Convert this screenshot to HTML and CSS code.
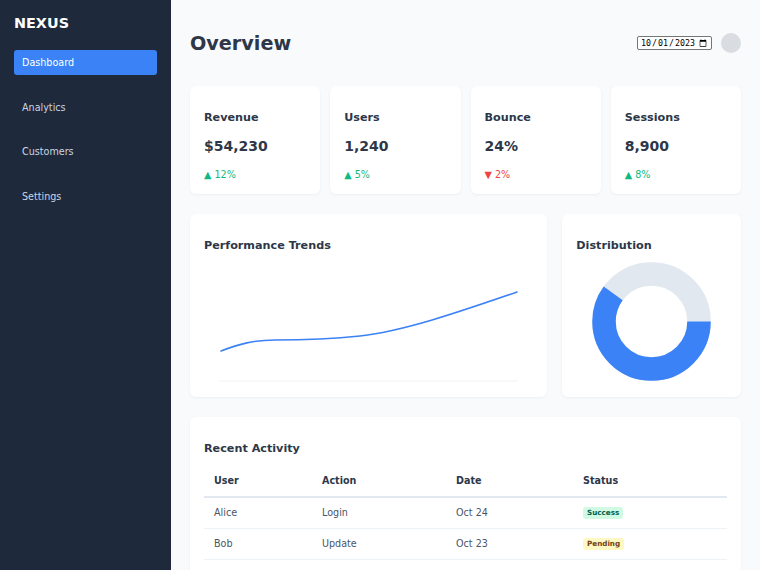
FILE: index.html
```html
<!DOCTYPE html>
<html lang="en">
<head>
<meta charset="UTF-8">
<meta name="viewport" content="width=device-width, initial-scale=1.0">
<title>Nexus Dashboard</title>
<link rel="stylesheet" href="styles.css">
</head>
<body>
<div class="app">
    <aside class="sidebar">
        <div class="logo">NEXUS</div>
        <nav class="nav">
            <a class="nav-item active" href="#">Dashboard</a>
            <a class="nav-item" href="#">Analytics</a>
            <a class="nav-item" href="#">Customers</a>
            <a class="nav-item" href="#">Settings</a>
        </nav>
    </aside>

    <main class="main">
        <header class="header">
            <h1>Overview</h1>
            <div class="header-right">
                <input class="date-input" type="date" value="2023-10-01">
                <div class="avatar"></div>
            </div>
        </header>

        <!-- stat cards -->
        <section class="stats">
            <div class="card stat">
                <h3>Revenue</h3>
                <div class="stat-value">$54,230</div>
                <div class="stat-change up">▲ 12%</div>
            </div>
            <div class="card stat">
                <h3>Users</h3>
                <div class="stat-value">1,240</div>
                <div class="stat-change up">▲ 5%</div>
            </div>
            <div class="card stat">
                <h3>Bounce</h3>
                <div class="stat-value">24%</div>
                <div class="stat-change down">▼ 2%</div>
            </div>
            <div class="card stat">
                <h3>Sessions</h3>
                <div class="stat-value">8,900</div>
                <div class="stat-change up">▲ 8%</div>
            </div>
        </section>

        <!-- charts -->
        <section class="charts">
            <div class="card">
                <h3>Performance Trends</h3>
                <svg class="chart" width="329" height="123" viewBox="0 0 329 123">
                    <line x1="15" y1="121" x2="314" y2="121" stroke="#eef2f6" stroke-width="1"/>
                    <path d="M17 91 C 35 84, 50 80, 71 80 S 128 79, 156 76 C 200 71, 255 52, 313 32"
                          fill="none" stroke="#3b82f6" stroke-width="1.6" stroke-linecap="round"/>
                </svg>
            </div>
            <div class="card">
                <h3>Distribution</h3>
                <svg class="donut" width="123" height="123" viewBox="0 0 123 123">
                    <circle cx="61.5" cy="61.5" r="47.5" fill="none" stroke="#e2e8f0" stroke-width="23.5"/>
                    <circle cx="61.5" cy="61.5" r="47.5" fill="none" stroke="#3b82f6" stroke-width="23.5"
                            stroke-dasharray="179 300"/>
                </svg>
            </div>
        </section>

        <!-- activity table -->
        <section class="card">
            <h3>Recent Activity</h3>
            <table class="table">
                <thead>
                    <tr>
                        <th class="col-user">User</th>
                        <th class="col-action">Action</th>
                        <th class="col-date">Date</th>
                        <th>Status</th>
                    </tr>
                </thead>
                <tbody>
                    <tr>
                        <td>Alice</td>
                        <td>Login</td>
                        <td>Oct 24</td>
                        <td><span class="badge success">Success</span></td>
                    </tr>
                    <tr>
                        <td>Bob</td>
                        <td>Update</td>
                        <td>Oct 23</td>
                        <td><span class="badge pending">Pending</span></td>
                    </tr>
                </tbody>
            </table>
        </section>
    </main>
</div>
</body>
</html>
```

FILE: styles.css
```css
body {
    margin: 0;
    font-family: 'DejaVu Sans', sans-serif;
    color: #2d3748;
    background: #f8fafc;
}

.app {
    display: flex;
    height: 100vh;
}

/* sidebar */
.sidebar {
    width: 171px;
    flex-shrink: 0;
    box-sizing: border-box;
    padding: 15px 14px 14px;
    background: #1e293b;
}

.logo {
    color: white;
    font-size: 14.4px;
    font-weight: bold;
    line-height: 16px;
    margin-bottom: 19px;
}

.nav {
    display: flex;
    flex-direction: column;
    gap: 19.5px;
}

.nav-item {
    display: block;
    padding: 6px 8px;
    line-height: 13px;
    font-size: 9.6px;
    color: #cbd5e1;
    text-decoration: none;
    border-radius: 3px;
}

.nav-item.active {
    background: #3b82f6;
    color: white;
}

/* main area */
.main {
    flex: 1;
    padding: 20px 19px;
    overflow-y: auto;
    scrollbar-width: none;
}

.header {
    display: flex;
    justify-content: space-between;
    align-items: center;
    height: 46px;
    margin-bottom: 20px;
}

.header h1 {
    margin: 0;
    padding-top: 1px;
    font-size: 19.2px;
    line-height: 22px;
    color: #2d3748;
}

.header-right {
    display: flex;
    align-items: center;
    gap: 9px;
}

.date-input {
    width: 75px;
    height: 14px;
    box-sizing: border-box;
    padding: 0 2px;
    font-family: 'DejaVu Sans Mono', monospace;
    font-size: 8.3px;
    border: 1px solid #767676;
    border-radius: 2px;
    background: white;
}

.avatar {
    width: 20px;
    height: 20px;
    border-radius: 50%;
    background: #d9dce1;
}

.card {
    background: white;
    border-radius: 6px;
    padding: 14px;
    box-shadow: 0 1px 3px rgba(0,0,0,0.05);
}

.card h3 {
    margin: 10px 0 0;
    font-size: 11.2px;
    line-height: 16px;
    color: #2d3748;
}

.stats {
    display: grid;
    grid-template-columns: repeat(4, 1fr);
    gap: 10px;
    margin-bottom: 20px;
}

.stat {
    padding-bottom: 12px;
}

.stat-value {
    margin-top: 10px;
    font-size: 14px;
    font-weight: bold;
    line-height: 20px;
}

.stat-change {
    margin-top: 12px;
    font-size: 9.6px;
    line-height: 14px;
}

.stat-change.up { color: #10b981; }
.stat-change.down { color: #ef4444; }

.charts {
    display: grid;
    grid-template-columns: 2fr 1fr;
    gap: 15px;
    margin-bottom: 20px;
}

.chart, .donut {
    display: block;
    margin-top: 6px;
}

.donut {
    margin-left: auto;
    margin-right: auto;
}

/* table */
.table {
    width: 100%;
    margin-top: 9px;
    border-collapse: collapse;
    table-layout: fixed;
    font-size: 9.6px;
}

.table th, .table td {
    padding: 8px 10px;
    line-height: 14px;
    text-align: left;
}

.table th {
    color: #2d3748;
    border-bottom: 2px solid #e2e8f0;
}

.table td {
    color: #4a5568;
    border-bottom: 1px solid #edf2f7;
}

.col-user { width: 88px; }
.col-action { width: 114px; }
.col-date { width: 107px; }

.badge {
    display: inline-block;
    padding: 2px 4px;
    font-size: 7.2px;
    font-weight: bold;
    line-height: 8px;
    border-radius: 3px;
    vertical-align: middle;
}

.badge.success {
    background: #d1fae5;
    color: #065f46;
}

.badge.pending {
    background: #fef9c3;
    color: #713f12;
}
```
